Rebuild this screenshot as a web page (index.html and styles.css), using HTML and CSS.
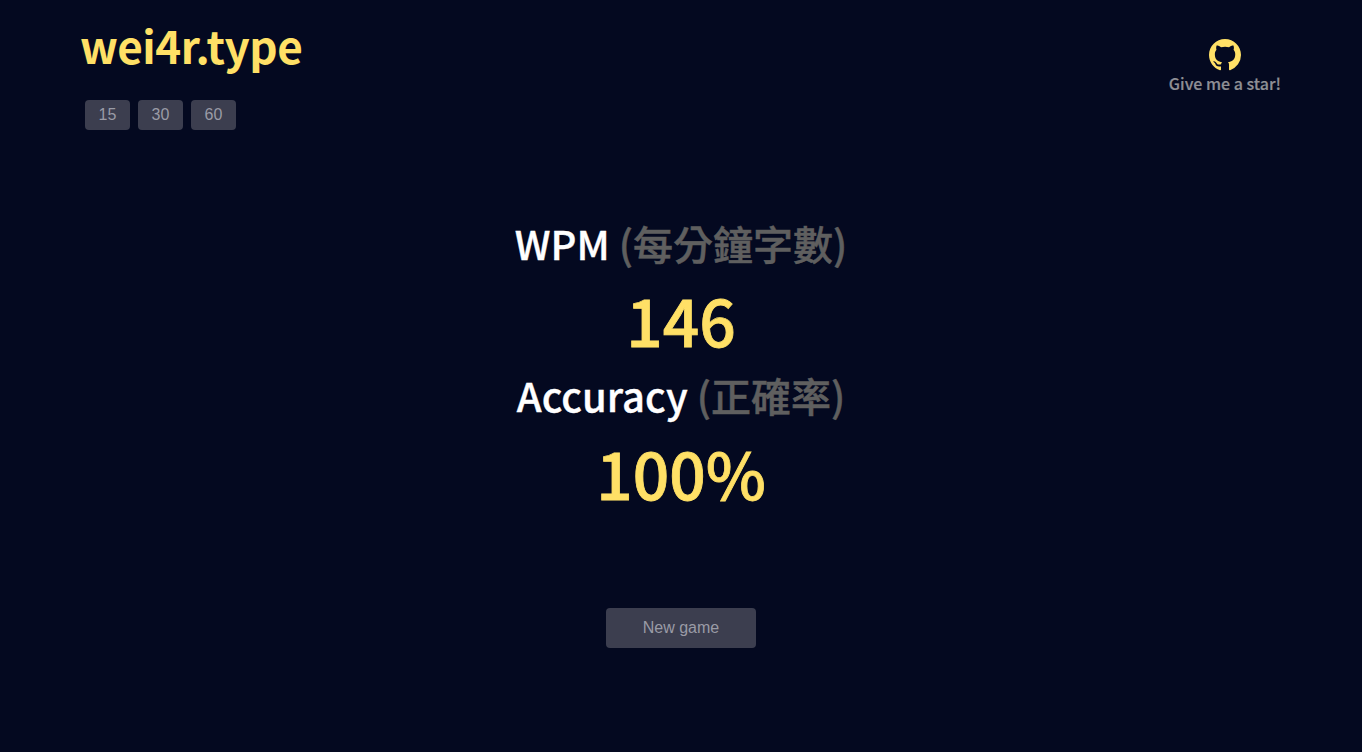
FILE: index.html
```html
<!DOCTYPE html>
<html lang="zh-Hant">
<head>
<meta charset="utf-8">
<title>wei4r.type</title>
<link rel="stylesheet" href="styles.css">
</head>
<body>
<div class="page">
  <header class="top">
    <div class="brand">
      <h1 class="logo">wei4r.type</h1>
      <div class="modes">
        <button class="btn mode">15</button>
        <button class="btn mode">30</button>
        <button class="btn mode">60</button>
      </div>
    </div>
    <a class="star">
      <svg class="gh" viewBox="0 0 16 16" aria-hidden="true"><path fill="#ffe066" fill-rule="evenodd" d="M8 0C3.58 0 0 3.58 0 8c0 3.54 2.29 6.53 5.47 7.59.4.07.55-.17.55-.38 0-.19-.01-.82-.01-1.49-2.01.37-2.53-.49-2.69-.94-.09-.23-.48-.94-.82-1.13-.28-.15-.68-.52-.01-.53.63-.01 1.08.58 1.23.82.72 1.21 1.87.87 2.33.66.07-.52.28-.87.51-1.07-1.78-.2-3.64-.89-3.64-3.95 0-.87.31-1.59.82-2.15-.08-.2-.36-1.02.08-2.12 0 0 .67-.21 2.2.82.64-.18 1.32-.27 2-.27s1.36.09 2 .27c1.53-1.04 2.2-.82 2.2-.82.44 1.1.16 1.92.08 2.12.51.56.82 1.27.82 2.15 0 3.07-1.87 3.75-3.65 3.95.29.25.54.73.54 1.48 0 1.07-.01 1.93-.01 2.2 0 .21.15.46.55.38A8.01 8.01 0 0 0 16 8c0-4.42-3.58-8-8-8z"/></svg>
      <span class="star-text">Give me a star!</span>
    </a>
  </header>
  <main class="results">
    <div class="label">WPM <span class="sub">(每分鐘字數)</span></div>
    <div class="value">146</div>
    <div class="label second">Accuracy <span class="sub">(正確率)</span></div>
    <div class="value last">100%</div>
    <button class="btn newgame">New game</button>
  </main>
</div>
</body>
</html>
```
FILE: styles.css
```css
* { box-sizing: border-box; }
html, body { margin: 0; height: 100%; }
body {
  background: #040920;
  font-family: "Noto Sans CJK TC", "Noto Sans", sans-serif;
  overflow: hidden;
}
.page { width: 1362px; height: 752px; display: flex; flex-direction: column; }
.top {
  display: flex;
  justify-content: space-between;
  align-items: flex-start;
  padding: 0 81px;
  height: 130px;
}
.brand { margin-left: -1px; }
.logo {
  margin: 15px 0 0;
  font-size: 44px;
  line-height: 60px;
  height: 60px;
  font-weight: 700;
  color: #ffe066;
  letter-spacing: -0.45px;
}
.modes { display: flex; gap: 8px; margin: 25px 0 0 5px; }
.btn {
  border: 0;
  padding: 0;
  background: #3c3e4f;
  color: #9a9ba6;
  font-family: "Liberation Sans", Arial, sans-serif;
  border-radius: 4px;
}
.mode { width: 45px; height: 30px; font-size: 16px; }
.star {
  display: flex;
  flex-direction: column;
  align-items: center;
  margin: 39px 0 0 0;
}
.gh { width: 32px; height: 32px; display: block; }
.star-text {
  margin-top: 1px;
  font-size: 16px;
  line-height: 23px;
  font-weight: 500;
  color: #8f8f95;
  -webkit-text-stroke: 0.2px #8f8f95;
}
.results {
  display: flex;
  flex-direction: column;
  align-items: center;
  padding-top: 83px;
}
.label {
  font-size: 40px;
  line-height: 60px;
  font-weight: 500;
  color: #fff;
  -webkit-text-stroke: 0.35px #fff;
}
.sub { color: #5f5f5f; -webkit-text-stroke: 0.5px #5f5f5f; }
.value {
  font-size: 64px;
  line-height: 93px;
  font-weight: 500;
  color: #ffe066;
  -webkit-text-stroke: 0.8px #ffe066;
}
.second { margin-top: -1px; }
.last { margin-top: 1px; }
.newgame {
  width: 150px;
  height: 40px;
  margin-top: 89px;
  font-size: 16px;
}
```
